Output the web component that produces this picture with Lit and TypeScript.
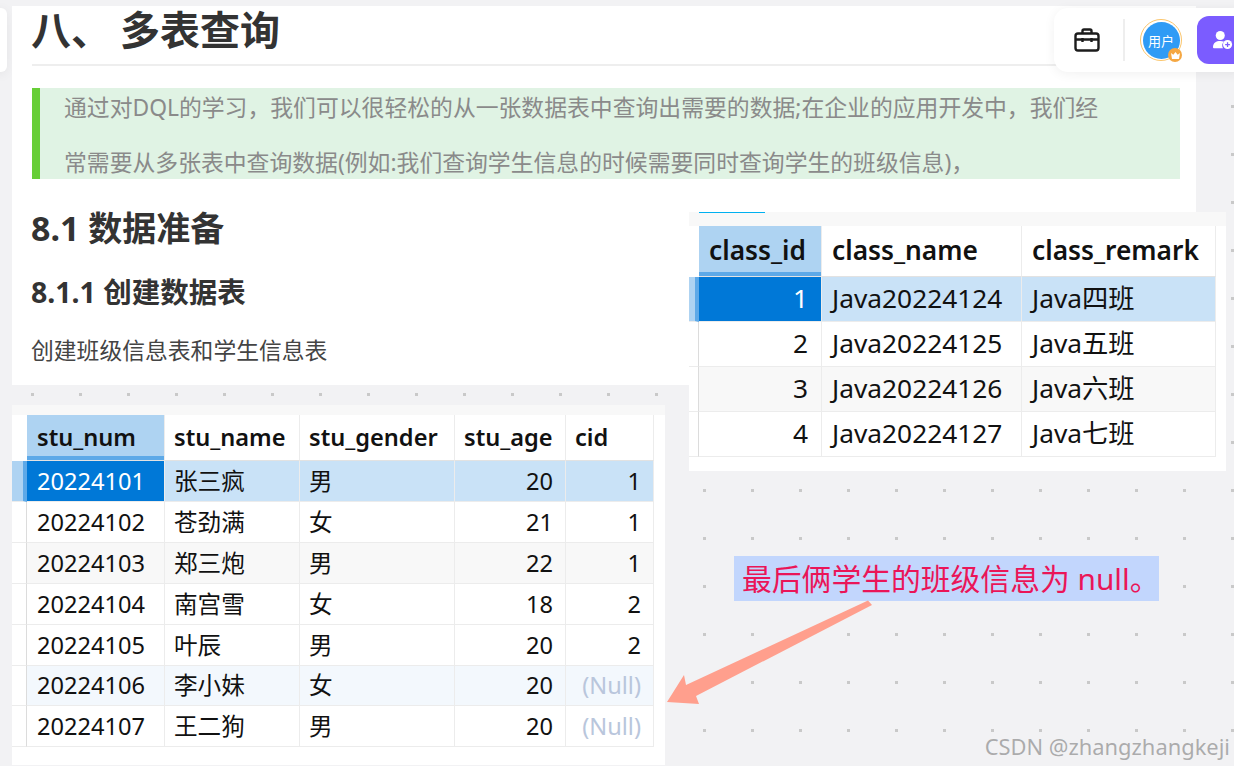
import { LitElement, html, css } from "lit";
import { customElement, property } from "lit/decorators.js";

type Col = { name: string; width: number; right?: boolean };

@customElement("data-grid")
class DataGrid extends LitElement {
  @property({ type: Array }) cols: Col[] = [];
  @property({ type: Array }) rows: string[][] = [];
  @property({ type: Array }) rowHeights: number[] = [];
  @property({ type: Number }) headerHeight = 46;
  @property({ type: Number }) gutter = 15;
  @property({ type: Number }) tint = -1;

  static styles = css`
    :host { display: block; font-family: "Noto Sans", "Noto Sans CJK SC", sans-serif; color: #111; }
    .g { display: grid; }
    .c { box-sizing: border-box; display: flex; align-items: center; padding: 0 10px var(--pb, 0) var(--pl, 10px); line-height: 30px; border-right: 1px solid #ececec; border-bottom: 1px solid #ececec; white-space: nowrap; overflow: hidden; }
    .gut { border-right: 1px solid #dcdcdc; border-bottom: 1px solid #ececec; box-sizing: border-box; }
    .gut.sel { background: #aed3f2; border-right: 4px solid #5da9e8; }
    .h { font-weight: 600; background: #fff; border-bottom-color: #e2e2e2; padding-bottom: 2px; }
    .h.first { background: #aed3f2; box-shadow: inset 0 -4px 0 #5da9e8; padding-left: 10px; }
    .c.first-col { padding-left: 10px; }
    .r { justify-content: flex-end; padding-right: var(--pr, 12px); }
    .sel-row { background: #c9e2f7; }
    .cur { background: #0078d7; color: #fff; }
    .alt { background: #f8f8f8; }
    .tint { background: #f3f8fd; }
    .null { color: #b9c6dc; }
  `;

  render() {
    const tmpl = `${this.gutter}px ${this.cols.map((c) => c.width + "px").join(" ")}`;
    const trows = `${this.headerHeight}px ${this.rowHeights.map((h) => h + "px").join(" ")}`;
    return html`<div class="g" style="grid-template-columns:${tmpl};grid-template-rows:${trows}">
      <div></div>
      ${this.cols.map((c, i) => html`<div class="c h ${i === 0 ? "first" : ""}">${c.name}</div>`)}
      ${this.rows.map(
        (row, ri) => html`
          <div class="gut ${ri === 0 ? "sel" : ""}"></div>
          ${row.map((v, ci) => {
            const k = ["c"];
            if (ci === 0) k.push("first-col");
            if (this.cols[ci].right) k.push("r");
            if (ri === 0) k.push(ci === 0 ? "cur" : "sel-row");
            else if (ri === 2) k.push("alt");
            else if (ri === this.tint) k.push("tint");
            if (v === "(Null)") k.push("null");
            return html`<div class=${k.join(" ")}>${v}</div>`;
          })}
        `
      )}
    </div>`;
  }
}

const STUDENTS = [
  ["20224101", "张三疯", "男", "20", "1"],
  ["20224102", "苍劲满", "女", "21", "1"],
  ["20224103", "郑三炮", "男", "22", "1"],
  ["20224104", "南宫雪", "女", "18", "2"],
  ["20224105", "叶辰", "男", "20", "2"],
  ["20224106", "李小妹", "女", "20", "(Null)"],
  ["20224107", "王二狗", "男", "20", "(Null)"],
];
const CLASSES = [
  ["1", "Java20224124", "Java四班"],
  ["2", "Java20224125", "Java五班"],
  ["3", "Java20224126", "Java六班"],
  ["4", "Java20224127", "Java七班"],
];

@customElement("app-root")
class AppRoot extends LitElement {
  static styles = css`
    :host {
      display: block; position: relative; width: 1234px; height: 766px; overflow: hidden;
      background-color: #f2f2f4;
      background-image: radial-gradient(circle at 32.5px 10.5px, #c9c9c9 1.9px, transparent 1.9px);
      background-size: 48px 48px;
      font-family: "Noto Sans", "Noto Sans CJK SC", sans-serif;
    }
    .win { position: absolute; background: #fff; }
    .doc { left: 12px; top: 6px; width: 1184px; height: 379px; box-sizing: border-box; padding: 0 16px 0 20px; color: #333; }
    h1, h2, h3, p { text-indent: -1px; }
    h1 { margin: 0; height: 58px; font-size: 40px; line-height: 48px; font-weight: 700; border-bottom: 2px solid #eee; color: #333; }
    h1 span { margin-left: 9px; }
    .note { margin-top: 22px; height: 91px; box-sizing: border-box; border-left: 8px solid #67ce37; background: #e0f3e4; padding-left: 24px; color: #8a8a8a; font-size: 22.84px; line-height: 40px; white-space: nowrap; display: flex; flex-direction: column; gap: 15px; }
    h2 { margin: 27px 0 0; font-size: 34px; line-height: 44px; font-weight: 700; }
    h3 { margin: 23px 0 0; font-size: 28.5px; line-height: 38px; font-weight: 700; }
    p { margin: 24px 0 0; font-size: 22.8px; line-height: 32px; color: #444; }
    .left { left: 12px; top: 405px; width: 653px; height: 360px; }
    .strip { background: #f8f8f8; }
    .left .strip { height: 10px; }
    .left data-grid { font-size: 23.6px; --pl: 9px; --pr: 12px; --pb: 1px; }
    .right { left: 689px; top: 212px; width: 537px; height: 259px; }
    .right .strip { height: 14px; position: relative; }
    .right .strip i { position: absolute; left: 10px; top: 0; width: 66px; height: 1px; background: #00b0f0; }
    .right data-grid { font-size: 26.3px; --pl: 10px; --pr: 13px; --pb: 2px; }
    .label { position: absolute; left: 734px; top: 556px; width: 425px; height: 45px; box-sizing: border-box; padding-left: 8px; background: #c2d6fd; color: #ea1558; font-size: 29.8px; line-height: 45px; white-space: nowrap; }
    .arrow { position: absolute; left: 660px; top: 595px; }
    .mark { position: absolute; right: 4px; top: 731px; font-size: 21.9px; line-height: 32px; color: rgba(140,140,140,.7); white-space: nowrap; }
    .tab { position: absolute; left: -10px; top: 8px; width: 17px; height: 64px; background: #fff; border-radius: 6px; box-shadow: 0 2px 12px rgba(0,0,0,.06); }
    .tools { position: absolute; left: 1054px; top: 8px; width: 200px; height: 64px; box-sizing: border-box; background: #fff; border-radius: 14px; box-shadow: 0 2px 12px rgba(0,0,0,.06); display: flex; align-items: center; padding-left: 20px; }
    .tools .sep { width: 2px; height: 42px; background: #eeeeee; margin: 0 15px 0 23px; }
    .ava { position: relative; width: 42px; height: 42px; box-sizing: border-box; border-radius: 50%; border: 1.5px solid #fbc56b; padding: 1.5px; }
    .ava div { width: 100%; height: 100%; border-radius: 50%; background: #2f9bf5; color: #fff; font-size: 13px; display: flex; align-items: center; justify-content: center; }
    .ava b { position: absolute; right: -1px; bottom: -2px; width: 14px; height: 14px; border-radius: 50%; background: #f5a742; display: flex; align-items: center; justify-content: center; }
    .add { width: 50px; height: 48px; border-radius: 12px; background: #7b5cff; margin-left: 15px; display: flex; align-items: center; padding-left: 16px; box-sizing: border-box; }
  `;

  render() {
    return html`
      <div class="tab"></div>
      <section class="win doc">
        <h1>八、<span>多表查询</span></h1>
        <div class="note">
          <div>通过对DQL的学习，我们可以很轻松的从一张数据表中查询出需要的数据;在企业的应用开发中，我们经</div>
          <div>常需要从多张表中查询数据(例如:我们查询学生信息的时候需要同时查询学生的班级信息)，</div>
        </div>
        <h2>8.1 数据准备</h2>
        <h3>8.1.1 创建数据表</h3>
        <p>创建班级信息表和学生信息表</p>
      </section>

      <section class="win left">
        <div class="strip"></div>
        <data-grid
          .cols=${[
            { name: "stu_num", width: 138 },
            { name: "stu_name", width: 135 },
            { name: "stu_gender", width: 155 },
            { name: "stu_age", width: 111, right: true },
            { name: "cid", width: 88, right: true },
          ]}
          .rows=${STUDENTS}
          .rowHeights=${[41, 41, 41, 41, 41, 40, 41]}
          .headerHeight=${46}
          .gutter=${15}
          .tint=${5}
        ></data-grid>
      </section>

      <section class="win right">
        <div class="strip"><i></i></div>
        <data-grid
          .cols=${[
            { name: "class_id", width: 123, right: true },
            { name: "class_name", width: 200 },
            { name: "class_remark", width: 194 },
          ]}
          .rows=${CLASSES}
          .rowHeights=${[45, 45, 45, 45]}
          .headerHeight=${51}
          .gutter=${10}
        ></data-grid>
      </section>

      <div class="label">最后俩学生的班级信息为 null。</div>
      <svg class="arrow" width="220" height="115" viewBox="660 595 220 115">
        <polygon fill="#ff9f8d" points="667,702 684,675 686,685 868,600.5 872,605 696,696 699,704" />
      </svg>
      <div class="mark">CSDN @zhangzhangkeji</div>

      <div class="tools">
        <svg width="26" height="24" viewBox="0 0 26 24" fill="none" stroke="#1c1c1c" stroke-width="2.4">
          <rect x="1.5" y="5.5" width="23" height="17" rx="2.5" />
          <path d="M8.5 5.5V3a1.5 1.5 0 0 1 1.5-1.5h6A1.5 1.5 0 0 1 17.5 3v2.5" />
          <path d="M1.5 11.5h23M8.5 10v4M17.5 10v4" />
        </svg>
        <div class="sep"></div>
        <div class="ava">
          <div>用户</div>
          <b><svg width="9" height="7" viewBox="0 0 9 7"><path fill="#fff" d="M0 1l2.3 1.7L4.5 0l2.2 2.7L9 1 8 7H1z"/></svg></b>
        </div>
        <div class="add">
          <svg width="20" height="20" viewBox="0 0 22 22">
            <circle cx="8" cy="6" r="5" fill="#fff" />
            <path fill="#fff" d="M0 19c0-5 3.5-7 8-7 1.5 0 2.8.2 4 .8A6 6 0 0 0 11 20H1c-.6 0-1-.4-1-1z" />
            <circle cx="16" cy="16" r="5" fill="#fff" />
            <path stroke="#7b5cff" stroke-width="1.4" d="M13.4 16h5.2M16 13.4v5.2" />
          </svg>
        </div>
      </div>
    `;
  }
}
